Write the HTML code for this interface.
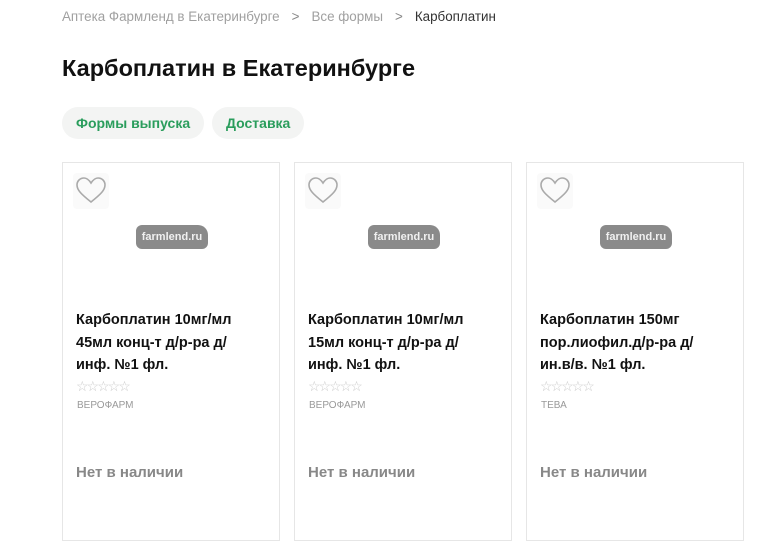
<!DOCTYPE html>
<html><head><meta charset="utf-8"><style>
body{margin:0;background:#fff;width:760px;height:554px;overflow:hidden;font-family:"Liberation Sans",sans-serif;position:relative}
.bc{position:absolute;top:9px;left:62px;font-size:13.4px;color:#a0a0a0;white-space:nowrap}
.bc .s{margin:0 12px;color:#888}
.bc .c{color:#333}
h1{position:absolute;top:55px;left:62px;margin:0;font-size:23.5px;font-weight:bold;color:#111}
.tag{position:absolute;top:107px;height:32px;line-height:32px;border-radius:16px;background:#f3f4f3;color:#2a9d5c;font-size:14px;font-weight:bold;padding:0 14px}
.card{position:absolute;top:162px;width:216px;height:377px;border:1px solid #e6e6e6;background:#fff}
.fav{position:absolute;left:10px;top:10px;width:36px;height:36px;background:#fafafa;border-radius:4px}
.logo{position:absolute;left:73px;top:62px;width:72px;height:24px;background:#8a8a8a;border-radius:6px 10px 6px 6px;color:#f0f0f0;font-size:11px;font-weight:bold;line-height:24px;text-align:center}
.name{position:absolute;left:13px;top:146px;width:172px;font-size:14.5px;font-weight:bold;line-height:22.5px;color:#111}
.stars{position:absolute;left:13px;top:215px;font-size:14px;color:#ccc;letter-spacing:-2px}
.mfr{position:absolute;left:14px;top:237px;font-size:10px;color:#999}
.na{position:absolute;left:13px;top:301px;font-size:15px;font-weight:bold;color:#888}
</style></head><body>
<div class="bc">Аптека Фармленд в Екатеринбурге<span class="s">&gt;</span>Все формы<span class="s">&gt;</span><span class="c">Карбоплатин</span></div>
<h1>Карбоплатин в Екатеринбурге</h1>
<div class="tag" style="left:62px">Формы выпуска</div>
<div class="tag" style="left:212px">Доставка</div>

<div class="card" style="left:62px">
<div class="fav"><svg width="36" height="36" viewBox="0 0 36 36"><path d="M18 28 C8 20 4 16 4 11 C4 7 7 4 11 4 C14 4 16 6 18 9 C20 6 22 4 25 4 C29 4 32 7 32 11 C32 16 28 20 18 28Z" fill="none" stroke="#aaa" stroke-width="1.6" transform="translate(0,1)"/></svg></div>
<div class="logo">farmlend.ru</div>
<div class="name">Карбоплатин 10мг/мл 45мл конц-т д/р-ра д/ инф. №1 фл.</div>
<div class="stars">☆☆☆☆☆</div><div class="mfr">ВЕРОФАРМ</div>
<div class="na">Нет в наличии</div></div>

<div class="card" style="left:294px">
<div class="fav"><svg width="36" height="36" viewBox="0 0 36 36"><path d="M18 28 C8 20 4 16 4 11 C4 7 7 4 11 4 C14 4 16 6 18 9 C20 6 22 4 25 4 C29 4 32 7 32 11 C32 16 28 20 18 28Z" fill="none" stroke="#aaa" stroke-width="1.6" transform="translate(0,1)"/></svg></div>
<div class="logo">farmlend.ru</div>
<div class="name">Карбоплатин 10мг/мл 15мл конц-т д/р-ра д/ инф. №1 фл.</div>
<div class="stars">☆☆☆☆☆</div><div class="mfr">ВЕРОФАРМ</div>
<div class="na">Нет в наличии</div></div>

<div class="card" style="left:526px">
<div class="fav"><svg width="36" height="36" viewBox="0 0 36 36"><path d="M18 28 C8 20 4 16 4 11 C4 7 7 4 11 4 C14 4 16 6 18 9 C20 6 22 4 25 4 C29 4 32 7 32 11 C32 16 28 20 18 28Z" fill="none" stroke="#aaa" stroke-width="1.6" transform="translate(0,1)"/></svg></div>
<div class="logo">farmlend.ru</div>
<div class="name">Карбоплатин 150мг пор.лиофил.д/р-ра д/ ин.в/в. №1 фл.</div>
<div class="stars">☆☆☆☆☆</div><div class="mfr">ТЕВА</div>
<div class="na">Нет в наличии</div></div>
</body></html>
